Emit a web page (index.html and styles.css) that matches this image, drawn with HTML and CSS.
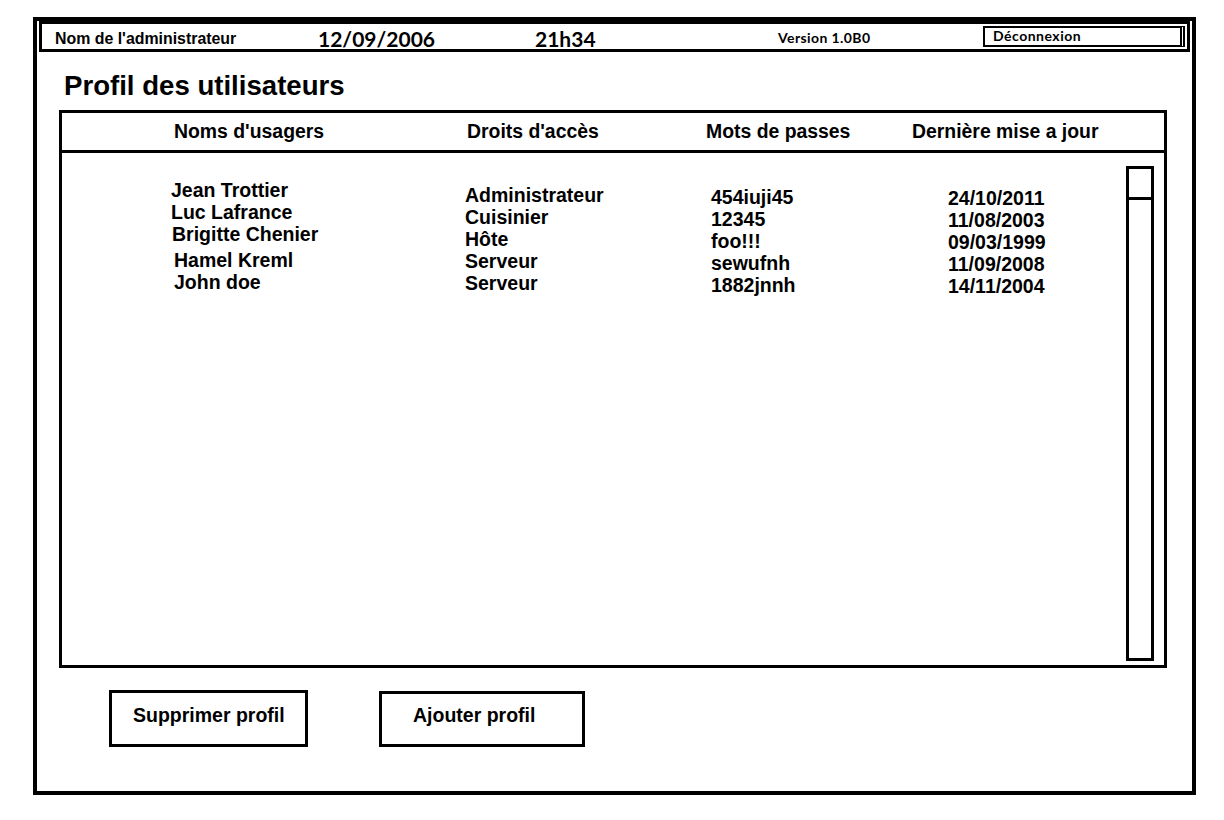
FILE: index.html
```html
<!DOCTYPE html>
<html lang="fr">
<head>
<meta charset="utf-8">
<title>Profil des utilisateurs</title>
<link rel="stylesheet" href="styles.css">
</head>
<body>
<div class="frame">
  <div class="topbar">
    <span class="admin">Nom de l'administrateur</span>
    <span class="date">12/09/2006</span>
    <span class="time">21h34</span>
    <span class="version">Version 1.0B0</span>
    <span class="logout">Déconnexion</span>
  </div>
  <h1 class="title">Profil des utilisateurs</h1>
  <div class="table">
    <div class="thead">
      <span>Noms d'usagers</span>
      <span>Droits d'accès</span>
      <span>Mots de passes</span>
      <span>Dernière mise a jour</span>
    </div>
    <div class="tbody">
      <div class="col col-names">
        <div>Jean Trottier</div>
        <div>Luc Lafrance</div>
        <div class="nudge-1">Brigitte Chenier</div>
        <div class="shift">Hamel Kreml</div>
        <div class="indent">John doe</div>
      </div>
      <div class="col col-rights">
        <div>Administrateur</div>
        <div>Cuisinier</div>
        <div>Hôte</div>
        <div>Serveur</div>
        <div>Serveur</div>
      </div>
      <div class="col col-pass">
        <div>454iuji45</div>
        <div>12345</div>
        <div>foo!!!</div>
        <div>sewufnh</div>
        <div>1882jnnh</div>
      </div>
      <div class="col col-date">
        <div>24/10/2011</div>
        <div>11/08/2003</div>
        <div>09/03/1999</div>
        <div>11/09/2008</div>
        <div>14/11/2004</div>
      </div>
      <div class="scrollbar"><div class="thumb"></div></div>
    </div>
  </div>
  <div class="actions">
    <div class="btn btn-del">Supprimer profil</div>
    <div class="btn btn-add">Ajouter profil</div>
  </div>
</div>
</body>
</html>
```

FILE: styles.css
```css
html, body {
  margin: 0;
  padding: 0;
  background: #fff;
}

body {
  font-family: "Liberation Sans", Arial, sans-serif;
  font-weight: bold;
  color: #000;
}

.frame {
  box-sizing: border-box;
  width: 1163px;
  height: 778px;
  margin: 17px 0 0 33px;
  border: 4px solid #000;
  display: flex;
  flex-direction: column;
}

/* ---------- top bar ---------- */
.topbar {
  box-sizing: border-box;
  height: 31px;
  margin: 0 2px;
  border: 3px solid #000;
  padding-left: 13px;
  display: grid;
  grid-template-columns: 263px 217px 243px 205px 202px;
  align-items: center;
  white-space: nowrap;
}

.admin {
  font-size: 15.9px;
  line-height: 25px;
  padding-top: 2px;
}

.date,
.time {
  font-family: Lato, "Open Sans", sans-serif;
  font-size: 21px;
  line-height: 25px;
  padding-top: 2px;
}

.version {
  font-family: Lato, "Open Sans", sans-serif;
  font-size: 14px;
  letter-spacing: 0.4px;
  line-height: 25px;
}

.logout {
  align-self: start;
  box-sizing: border-box;
  margin-top: 2px;
  height: 21px;
  border: 2px solid #000;
  border-right: 5px double #000;
  padding: 0 0 0 8px;
  font-family: Lato, "Open Sans", sans-serif;
  font-size: 14px;
  letter-spacing: 0.5px;
  line-height: 15px;
}

/* ---------- title ---------- */
.title {
  margin: 18px 0 0 27px;
  font-size: 27.6px;
  line-height: 32px;
  font-weight: bold;
}

/* ---------- table ---------- */
.table {
  box-sizing: border-box;
  height: 558px;
  margin: 8px 25px 0 22px;
  border: 3px solid #000;
  display: flex;
  flex-direction: column;
}

.thead {
  flex: none;
  height: 37px;
  border-bottom: 3px solid #000;
  padding-left: 112px;
  display: grid;
  grid-template-columns: 293px 239px 206px auto;
  font-size: 19.4px;
  line-height: 37px;
  white-space: nowrap;
}

.tbody {
  flex: 1;
  display: flex;
  padding-left: 109px;
  font-size: 19.5px;
  line-height: 22px;
  white-space: nowrap;
}

.col-names { width: 294px; padding-top: 26px; }
.col-rights { width: 246px; padding-top: 31px; }
.col-pass { width: 237px; padding-top: 33px; }
.col-date { padding-top: 34px; }

.col-names .nudge-1 { padding-left: 1px; }
.col-names .shift { margin-top: 4px; padding-left: 3px; }
.col-names .indent { padding-left: 3px; }

.scrollbar {
  box-sizing: border-box;
  width: 28px;
  margin: 13px 10px 4px auto;
  border: 3px solid #000;
}

.thumb {
  height: 28px;
  border-bottom: 3px solid #000;
}

/* ---------- buttons ---------- */
.actions {
  display: flex;
  align-items: flex-start;
  gap: 71px;
  margin-top: 22px;
  padding-left: 72px;
}

.btn {
  box-sizing: border-box;
  border: 3px solid #000;
  font-size: 19.5px;
  line-height: 22px;
  white-space: nowrap;
}

.btn-del {
  width: 199px;
  height: 57px;
  padding: 11px 0 0 21px;
}

.btn-add {
  width: 206px;
  height: 56px;
  margin-top: 1px;
  padding: 10px 0 0 31px;
}
```
